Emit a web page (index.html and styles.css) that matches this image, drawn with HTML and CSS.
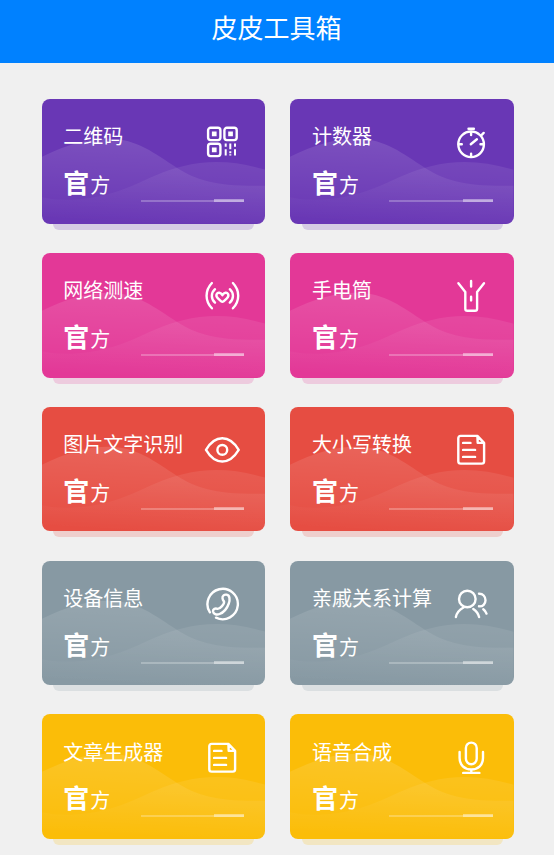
FILE: index.html
```html
<!DOCTYPE html>
<html lang="zh-CN">
<head>
  <meta charset="utf-8">
  <title>皮皮工具箱</title>
  <link rel="stylesheet" href="styles.css">
</head>
<body>
  <!-- shared icons -->
  <svg class="sprite" width="0" height="0">
    <defs>
      <linearGradient id="fade1" x1="0.55" y1="0" x2="0.4" y2="1">
        <stop offset="0" stop-color="#fff" stop-opacity="0.13"/>
        <stop offset="1" stop-color="#fff" stop-opacity="0"/>
      </linearGradient>
      <linearGradient id="fade2" x1="0.6" y1="0" x2="0.4" y2="1">
        <stop offset="0" stop-color="#fff" stop-opacity="0.08"/>
        <stop offset="1" stop-color="#fff" stop-opacity="0"/>
      </linearGradient>
    </defs>
    <symbol id="waves" viewBox="0 0 224 125" preserveAspectRatio="none">
      <path fill="url(#fade1)" d="M0 58C25 46 45 40 67 40C95 40 113 55 135 69C156 82 174 88 224 87V125H0Z"/>
      <path fill="url(#fade2)" d="M0 98.500C12 101 20 101 30 101C82 99 104 76 141 67.500C170 60 197 63 224 71V125H0Z"/>
    </symbol>
    <symbol id="qrcode" viewBox="0 0 36 36">
      <rect x="4.100" y="3.800" width="12.300" height="12.300" rx="2.500"/>
      <rect x="20.400" y="3.800" width="12.300" height="12.300" rx="2.500"/>
      <rect x="4.100" y="19.800" width="12.300" height="12.300" rx="2.500"/>
      <path class="solid" d="M7.900 7.600h4.700v4.700H7.900zM24.200 7.600h4.700v4.700h-4.700zM7.900 23.600h4.700v4.700H7.900z"/>
      <path class="bars" d="M21.700 19.500v3.200M21.700 25.200v6.400M26.300 19.500v5.800M26.300 27.200v2M26.300 30.200v1.400M31 19.500v3.200M31 25.200v6.400"/>
    </symbol>
    <symbol id="timer" viewBox="0 0 36 36">
      <circle cx="18.100" cy="20.300" r="12.800"/>
      <path d="M15.500 4.700h5.400M17.800 20.300l6.100-5M18.100 8v3M18.100 29.700v3M5.800 20.300h3M27.500 20.300h3M28.300 11.300l2.400-2.400"/>
    </symbol>
    <symbol id="signal" viewBox="0 0 36 36">
      <path d="M7.900 5C.8 12.500.8 22.800 7.900 30.300M11 11.200C6.800 15 6.800 20.800 11 24.600M28.900 5C36 12.500 36 22.800 28.900 30.300M25.800 11.200C30 15 30 20.800 25.800 24.600"/>
      <path d="M18.400 17.200C16.800 14.300 13.800 14 12.700 16C11.700 18 12.800 19.400 14.200 20.700L17.200 23.400Q18.400 24.300 19.600 23.400L22.600 20.700C24 19.400 25.100 18 24.100 16C23 14 20 14.300 18.400 17.200Z"/>
    </symbol>
    <symbol id="torch" viewBox="0 0 36 36">
      <path d="M5.400 5.200L12.300 14V30.700Q12.300 32.800 14.400 32.800H22Q24.100 32.800 24.100 30.700V14L31 5.200M18.100 3v5.600M18.100 18.700v3.700"/>
    </symbol>
    <symbol id="eye" viewBox="0 0 36 36">
      <path d="M2 17.900C5.200 12.400 10.700 6.300 18.300 6.300S31.400 12.400 34.700 17.900C31.400 23.400 25.900 29.500 18.300 29.500S5.200 23.400 2 17.900Z"/>
      <circle cx="18.300" cy="17.900" r="4.900"/>
    </symbol>
    <symbol id="doc" viewBox="0 0 36 36">
      <path d="M24.400 3.900H7.700Q5.300 3.900 5.300 6.300V29.200Q5.300 31.600 7.700 31.600H28.700Q31.100 31.600 31.100 29.200V10.900ZL24.700 10.900H31.100M10.100 10.900h7.400M10.100 17.900h12M10.100 24.900h12"/>
    </symbol>
    <symbol id="phone" viewBox="0 0 36 36">
      <path d="M5.900 26.300A15.200 15.200 0 1 1 12 31.700"/>
      <path d="M18.500 12.200C18.100 9.700 20.400 8.200 22.600 8.700C26 9.400 26.100 13.700 24.800 17.500C23.200 22 19.800 26.400 15.600 28C12.400 29.200 9.300 27.800 9 25.400C8.800 23 11.300 21.800 13.600 22.900C16 23 20.800 17.800 20 15.400Q18.800 14.200 18.500 12.200Z"/>
    </symbol>
    <symbol id="people" viewBox="0 0 36 36">
      <circle cx="14.300" cy="13" r="8.300"/>
      <path d="M2.900 31Q4.200 24.800 10.500 21.500M20.300 22.900Q24.900 25.900 26.100 31M26 7.700C29.800 7.500 32.500 10.500 32.500 14.200S29.800 20.700 26 20.300M30.300 23.300Q32.600 25 33.500 27.600"/>
    </symbol>
    <symbol id="mic" viewBox="0 0 36 36">
      <rect x="12.900" y="2.600" width="10.800" height="21.600" rx="5.400"/>
      <path d="M6.600 12V17.900C6.600 25 11.300 29.400 18.300 29.400S30 25 30 17.900V12M18.300 29.400V32.700M10.200 32.900H26.400"/>
    </symbol>
  </svg>

  <header class="navbar">皮皮工具箱</header>

  <main class="tools">
    <div class="card purple">
      <svg class="waves"><use href="#waves"/></svg>
      <div class="card-top"><span class="name">二维码</span><svg class="icon"><use href="#qrcode"/></svg></div>
      <div class="card-bottom"><span class="tag"><b>官</b>方</span><div class="line"></div></div>
    </div>
    <div class="card purple">
      <svg class="waves"><use href="#waves"/></svg>
      <div class="card-top"><span class="name">计数器</span><svg class="icon"><use href="#timer"/></svg></div>
      <div class="card-bottom"><span class="tag"><b>官</b>方</span><div class="line"></div></div>
    </div>
    <div class="card pink">
      <svg class="waves"><use href="#waves"/></svg>
      <div class="card-top"><span class="name">网络测速</span><svg class="icon"><use href="#signal"/></svg></div>
      <div class="card-bottom"><span class="tag"><b>官</b>方</span><div class="line"></div></div>
    </div>
    <div class="card pink">
      <svg class="waves"><use href="#waves"/></svg>
      <div class="card-top"><span class="name">手电筒</span><svg class="icon"><use href="#torch"/></svg></div>
      <div class="card-bottom"><span class="tag"><b>官</b>方</span><div class="line"></div></div>
    </div>
    <div class="card red">
      <svg class="waves"><use href="#waves"/></svg>
      <div class="card-top"><span class="name">图片文字识别</span><svg class="icon"><use href="#eye"/></svg></div>
      <div class="card-bottom"><span class="tag"><b>官</b>方</span><div class="line"></div></div>
    </div>
    <div class="card red">
      <svg class="waves"><use href="#waves"/></svg>
      <div class="card-top"><span class="name">大小写转换</span><svg class="icon"><use href="#doc"/></svg></div>
      <div class="card-bottom"><span class="tag"><b>官</b>方</span><div class="line"></div></div>
    </div>
    <div class="card grey">
      <svg class="waves"><use href="#waves"/></svg>
      <div class="card-top"><span class="name">设备信息</span><svg class="icon"><use href="#phone"/></svg></div>
      <div class="card-bottom"><span class="tag"><b>官</b>方</span><div class="line"></div></div>
    </div>
    <div class="card grey">
      <svg class="waves"><use href="#waves"/></svg>
      <div class="card-top"><span class="name">亲戚关系计算</span><svg class="icon"><use href="#people"/></svg></div>
      <div class="card-bottom"><span class="tag"><b>官</b>方</span><div class="line"></div></div>
    </div>
    <div class="card yellow">
      <svg class="waves"><use href="#waves"/></svg>
      <div class="card-top"><span class="name">文章生成器</span><svg class="icon"><use href="#doc"/></svg></div>
      <div class="card-bottom"><span class="tag"><b>官</b>方</span><div class="line"></div></div>
    </div>
    <div class="card yellow">
      <svg class="waves"><use href="#waves"/></svg>
      <div class="card-top"><span class="name">语音合成</span><svg class="icon"><use href="#mic"/></svg></div>
      <div class="card-bottom"><span class="tag"><b>官</b>方</span><div class="line"></div></div>
    </div>
  </main>
</body>
</html>
```
FILE: styles.css
```css
* {
  box-sizing: border-box;
}

body {
  margin: 0;
  height: 855px;
  overflow: hidden;
  background-color: #f0f0f0;
  color: #fff;
  font-family: "Noto Sans CJK SC", sans-serif;
}

.sprite {
  position: absolute;
}

.navbar {
  height: 62.5px;
  padding: 8px 1px 0 0;
  background-color: #0081ff;
  font-size: 26px;
  line-height: 38px;
  text-align: center;
}

.tools {
  display: grid;
  grid-template-columns: 223.7px 223.7px;
  gap: 29.2px 25px;
  padding: 36.8px 0 0 41.5px;
}

.card {
  position: relative;
  height: 124.6px;
  padding: 25.2px 21.2px 0 21.8px;
  border-radius: 8px;
  background-color: var(--color);
}

/* strip peeking out below the card */
.card::after {
  content: "";
  position: absolute;
  left: 11.5px;
  right: 11px;
  top: 100%;
  height: 6px;
  border-radius: 0 0 7px 7px;
  background-color: var(--color);
  opacity: 0.2;
}

.purple { --color: #6937b5; }
.pink { --color: #e33897; }
.red { --color: #e64d42; }
.grey { --color: #8799a3; }
.yellow { --color: #fbbd08; }

.waves {
  position: absolute;
  top: 0;
  left: 0;
  width: 100%;
  height: 100%;
  border-radius: 8px;
}

.card-top,
.card-bottom {
  position: relative;
  display: flex;
  justify-content: space-between;
}

.card-top {
  height: 36px;
  padding-right: 4.2px;
}

.name {
  font-size: 20px;
  line-height: 23.4px;
  white-space: nowrap;
}

.icon {
  flex: none;
  width: 36px;
  height: 36px;
  fill: none;
  stroke: #fff;
  stroke-width: 2.4;
  stroke-linecap: round;
  stroke-linejoin: round;
}

.solid {
  fill: #fff;
  stroke: none;
}

.bars {
  stroke-width: 2;
  stroke-linecap: butt;
}

.card-bottom {
  align-items: flex-end;
  height: 41.8px;
}

.tag {
  margin-bottom: -2px;
  font-size: 20px;
  line-height: 38px;
}

.tag b {
  margin-right: 1px;
  font-size: 26px;
}

.line {
  display: flex;
  align-items: flex-end;
  justify-content: flex-end;
  width: 103.5px;
  border-bottom: 2px solid rgba(255, 255, 255, 0.25);
}

.line::after {
  content: "";
  width: 30px;
  height: 3px;
  margin-bottom: -2px;
  background-color: rgba(255, 255, 255, 0.42);
}
```
